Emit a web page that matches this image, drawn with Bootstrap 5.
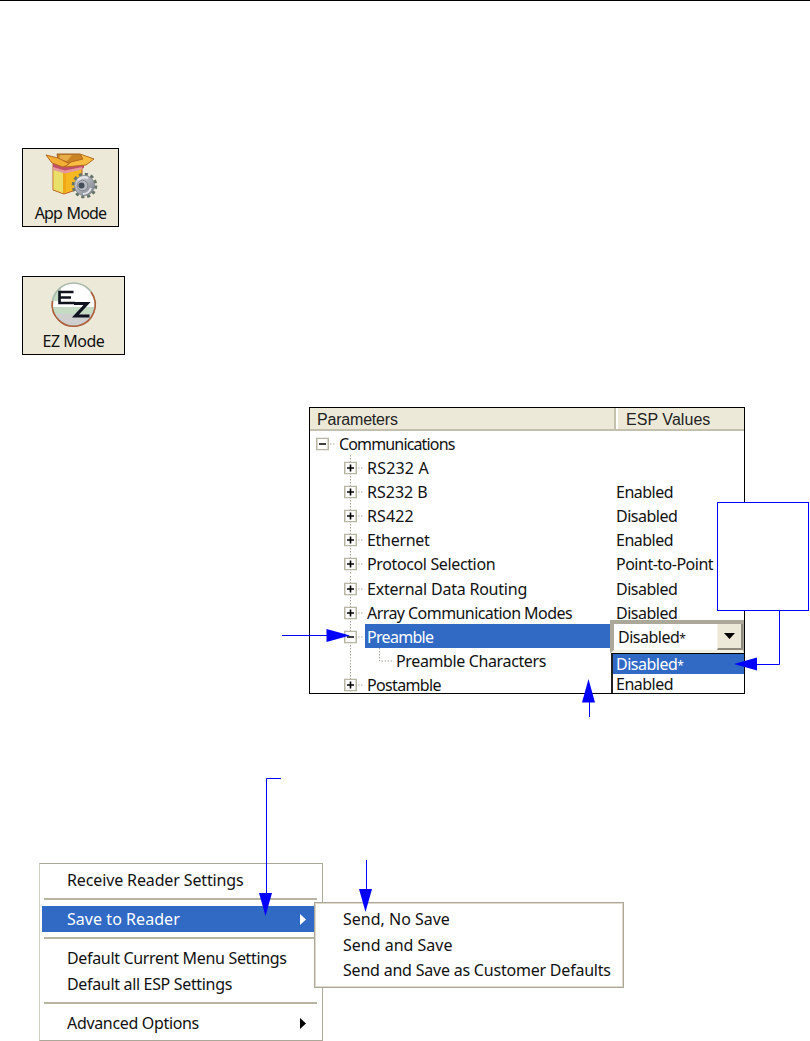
<!DOCTYPE html>
<html lang="en">
<head>
  <meta charset="UTF-8" />
  <meta name="viewport" content="width=device-width, initial-scale=1.0"/>
  <title>ESP Modes and Menus</title>
  <link rel="stylesheet" href="https://cdn.jsdelivr.net/npm/bootstrap@5.3.0/dist/css/bootstrap.min.css">
  <style>
    body {
      font-family: "Noto Sans", "Open Sans", sans-serif;
      font-size: 16px;
      line-height: 24px;
      color: #111;
      background-color: #fff;
    }
    .page {
      width: 810px;
      height: 1041px;
      border-top: 1px solid #000;
    }
    .mode-btn {
      height: 79px;
      border: 1px solid #000;
      background-color: #ece9d8;
      line-height: 20px;
      letter-spacing: -0.5px;
    }
    .mode-app { width: 97px; margin: 147px 0 0 22px; }
    .mode-ez { width: 103px; margin: 49px 0 0 22px; }
    .mode-app .mode-label { word-spacing: 1px; letter-spacing: -0.8px; }

    /* Parameter tree */
    .tree {
      width: 436px;
      height: 287px;
      margin: 52px 0 0 309px;
      border: 1px solid #000;
    }
    .tree-head {
      height: 23px;
      background-color: #ece9d8;
      border-bottom: 2px solid #c3c0ae;
      font-family: "Liberation Sans", Arial, sans-serif;
      color: #222;
    }
    .head-name {
      width: 306px;
      padding-left: 7px;
      border-right: 2px solid #c3c0ae;
      letter-spacing: -0.2px;
    }
    .head-value {
      padding-left: 8px;
      border-left: 2px solid #fff;
      letter-spacing: 0.05px;
    }
    .tree-row { height: 24.1px; line-height: 26px; }
    .tree-row svg { flex: none; }
    .tree-name { width: 248px; padding-left: 2px; margin-right: 3px; }
    .tree-name.root { width: 276px; letter-spacing: -0.85px; }
    .tree-name, .tree-kids { white-space: nowrap; }
    .tree-kids .tree-row { padding-left: 32px; }
    .picked { background-color: #316ac5; color: #fff; }
    .val { letter-spacing: -0.5px; }
    .combo {
      left: 300px;
      top: 212px;
      width: 134px;
      height: 73px;
      background-color: #fff;
    }
    .combo-field {
      height: 33px;
      line-height: 27px;
      border-style: solid;
      border-width: 4px 1px 3px 4px;
      border-color: #aca899 #aca899 #f1efe2 #aca899;
    }
    .combo-arrow {
      width: 26px;
      background-color: #ece9d8;
      border-right: 2px solid #8d8a7b;
      border-bottom: 2px solid #8d8a7b;
      border-left: 1px solid #f5f3e8;
    }
    .combo-list {
      margin-left: 1px;
      height: 40px;
      border-top: 1px solid #000;
      border-left: 2px solid #222;
      line-height: 21px;
    }
    .combo-list div { height: 20px; padding-left: 3px; }
    .star { font-size: 12px; }

    /* Context menu */
    .menu-box {
      width: 284px;
      height: 178px;
      margin: 169px 0 0 39px;
      padding: 3px 3px 3px 2px;
      border: 1px solid #aca899;
      border-left: 1px solid #d6d2c2;
      background-color: #fff;
      line-height: 26px;
    }
    .menu-line { height: 26px; padding-left: 25px; padding-right: 13px; white-space: nowrap; letter-spacing: -0.13px; }
    .menu-line.tight { letter-spacing: -0.33px; }
    .menu-line.plain { letter-spacing: 0.05px; }
    .menu-rule { height: 2px; margin: 5px 2px 6px 2px; background-color: #b7b4a4; }
    .submenu {
      left: 274px;
      top: 38px;
      width: 310px;
      height: 86px;
      padding: 3px;
      border: 1px solid #aca899;
      outline: 1px solid #dedacb;
      outline-offset: -2px;
      background-color: #fff;
    }
    .submenu div { height: 25.6px; padding-left: 25px; white-space: nowrap; }
    .submenu .tight { letter-spacing: -0.21px; }
    .callout { left: 717px; top: 502px; width: 92px; height: 109px; background-color: #fff; border: 1px solid #00f; }
  </style>
</head>
<body>

  <!-- Tree expander symbols -->
  <svg class="d-none">
    <defs>
      <symbol id="box" viewBox="0 0 13 13">
        <rect x="0.75" y="0.75" width="11.5" height="11.5" fill="#fff" stroke="#b9b5a3" stroke-width="1.5"/>
        <path d="M3 6.5H10" stroke="#000" stroke-width="1.6"/>
      </symbol>
      <symbol id="minus" viewBox="0 0 23 24">
        <path d="M8.5 0V24" stroke="#aaa798" stroke-dasharray="1.5 1.5"/>
        <path d="M16 13H22" stroke="#aaa798" stroke-dasharray="1.5 1.5"/>
        <use href="#box" x="2" y="6.500" width="13" height="13"/>
      </symbol>
      <symbol id="plus" viewBox="0 0 23 24">
        <use href="#minus" width="23" height="24"/>
        <path d="M8.5 9.500V16.500" stroke="#000" stroke-width="1.6"/>
      </symbol>
    </defs>
  </svg>

  <main class="page position-relative overflow-hidden d-flex flex-column">

    <!-- Mode buttons -->
    <div class="mode-btn mode-app d-flex flex-column align-items-center flex-shrink-0">
      <svg width="55" height="54" viewBox="-1 -1 55 54">
        <defs>
          <linearGradient id="metal" x1="0" y1="0" x2="1" y2="1">
            <stop offset="0" stop-color="#e0e2e6"/><stop offset="1" stop-color="#747a84"/>
          </linearGradient>
        </defs>
        <path d="M9 14L20 18L38 13V38L20 44L9 40Z" fill="#f5b820" stroke="#b9642a"/>
        <path d="M9.500 16L19 19V43L9.500 39.500Z" fill="#eadf68"/>
        <path d="M19 19L22 18V42L19 43Z" fill="#f0a818"/>
        <path d="M9 12L21 15L40 11V18L21 22L9 18Z" fill="#c0506c"/>
        <path d="M9 17L21 20.500L38 17V19.500L21 23.500L9 20Z" fill="#e59a9c"/>
        <path d="M13 4H36L40 9L27 14L14 9Z" fill="#c98224" stroke="#a8601c"/>
        <path d="M16 5H28L23 11L15 9Z" fill="#e6ad48"/>
        <path d="M2 5L14 8L26 14L19 17L8 13Z" fill="#f2ae35" stroke="#b66b20"/>
        <path d="M36 4L50 9L42 15L21 17L27 12L39 9Z" fill="#f8bd42" stroke="#b66b20"/>
        <circle cx="40.500" cy="35.500" r="10.800" fill="none" stroke="#647469" stroke-width="4" stroke-dasharray="3 2.650"/>
        <circle cx="40.500" cy="35.500" r="10" fill="url(#metal)" stroke="#858b92"/>
        <path d="M34 30A9 9 0 0 1 44 28M47 38A9 9 0 0 1 39 44" fill="none" stroke="#e2e4e7" stroke-width="2"/>
        <circle cx="38.500" cy="35.500" r="5.300" fill="#b7bbc2" stroke="#7d828c"/>
        <circle cx="37.500" cy="35.500" r="3" fill="#444c5a"/>
      </svg>
      <span class="mode-label">App Mode</span>
    </div>

    <div class="mode-btn mode-ez d-flex flex-column align-items-center flex-shrink-0">
      <svg width="50" height="54" viewBox="0 0 50 54">
        <defs><clipPath id="disc"><circle cx="24.700" cy="27.600" r="21.500"/></clipPath></defs>
        <g clip-path="url(#disc)">
          <path d="M0 0H50V54H0Z" fill="#fff"/>
          <path d="M0 30H50V37H0ZM4 10H12V24H4Z" fill="#c5dbc3"/>
          <path d="M0 37H50V54H0Z" fill="#cfcfcf"/>
        </g>
        <circle cx="24.700" cy="27.600" r="21.500" fill="none" stroke="#a9b9aa" stroke-width="1.5"/>
        <path d="M3.500 24A21.500 21.500 0 1 0 42 15" fill="none" stroke="#b0603c" stroke-width="1.6"/>
        <path d="M24.500 15H10.500V26H26M11 20.500H22" fill="none" stroke="#10131f" stroke-width="2.6"/>
        <path d="M25 26.500H38L26.500 39H40.500" fill="none" stroke="#10131f" stroke-width="3.2"/>
      </svg>
      <span class="mode-label">EZ Mode</span>
    </div>

    <!-- Parameters -->
    <section class="tree position-relative overflow-hidden flex-shrink-0">
      <div class="tree-head d-flex">
        <div class="head-name">Parameters</div>
        <div class="head-value flex-fill">ESP Values</div>
      </div>
      <div class="tree-row d-flex ps-1">
        <svg width="23" height="24"><path d="M16 13H22" stroke="#aaa798" stroke-dasharray="1.5 1.5"/><use href="#box" x="2" y="6.500" width="13" height="13"/></svg>
        <div class="tree-name root">Communications</div>
      </div>
      <div class="tree-kids" id="rows"></div>

      <div class="combo position-absolute val">
        <div class="combo-field d-flex">
          <div class="flex-fill ps-1">Disabled<span class="star">*</span></div>
          <div class="combo-arrow d-flex align-items-center justify-content-center">
            <svg width="11" height="6"><path d="M0 0H11L5.500 6Z"/></svg>
          </div>
        </div>
        <div class="combo-list">
          <div class="picked">Disabled<span class="star">*</span></div>
          <div>Enabled</div>
        </div>
      </div>
    </section>

    <!-- Reader menu -->
    <nav class="menu-box position-relative flex-shrink-0">
      <div class="menu-line">Receive Reader Settings</div>
      <div class="menu-rule"></div>
      <div class="menu-line plain picked d-flex align-items-center justify-content-between">
        <span>Save to Reader</span>
        <svg width="6" height="11"><path d="M0 0L6 5.500L0 11Z" fill="#fff"/></svg>
      </div>
      <div class="menu-rule"></div>
      <div class="menu-line tight">Default Current Menu Settings</div>
      <div class="menu-line tight">Default all ESP Settings</div>
      <div class="menu-rule"></div>
      <div class="menu-line tight d-flex align-items-center justify-content-between">
        <span>Advanced Options</span>
        <svg width="6" height="11"><path d="M0 0L6 5.500L0 11Z"/></svg>
      </div>
      <div class="submenu position-absolute">
        <div>Send, No Save</div>
        <div>Send and Save</div>
        <div class="tight">Send and Save as Customer Defaults</div>
      </div>
    </nav>

  </main>

  <!-- Callout box and arrows -->
  <div class="callout position-absolute"></div>
  <svg class="position-absolute top-0 start-0" width="810" height="1041">
    <path d="M779.500 611V664.500H757M282 635.500H327M589.500 702V717M281 778.500H266.500V894M366.500 860V890" fill="none" stroke="#00f"/>
    <path d="M734 664L757 657.500V670.500ZM350 635.500L326.500 629V642ZM588.500 679L582 702.500H595ZM265.500 916L259 893H272ZM365.500 912L359 889H372Z" fill="#00f"/>
  </svg>

  <script src="https://cdn.jsdelivr.net/npm/bootstrap@5.3.0/dist/js/bootstrap.bundle.min.js"></script>
  <script>
    // name, value, row kind, letter spacing of the name
    const params = [
      ["RS232 A", "", "plus", 0.2],
      ["RS232 B", "Enabled", "plus", 0],
      ["RS422", "Disabled", "plus", 0.1],
      ["Ethernet", "Enabled", "plus", -0.3],
      ["Protocol Selection", "Point-to-Point", "plus", -0.37],
      ["External Data Routing", "Disabled", "plus", -0.22],
      ["Array Communication Modes", "Disabled", "plus", -0.56],
      ["Preamble", "", "minus", -0.7],
      ["Preamble Characters", "", "child", -0.37],
      ["Postamble", "", "plus", -0.65]
    ];

    document.getElementById("rows").innerHTML = params.map(([name, value, kind, spacing]) => {
      const icon = kind === "child"
        ? '<svg width="52" height="24"><path d="M8.5 0V24M37.5 0V13H51" fill="none" stroke="#aaa798" stroke-dasharray="1.5 1.5"/></svg>'
        : `<svg width="23" height="24"><use href="#${kind}" width="23" height="24"/></svg>`;
      const picked = kind === "minus" ? " picked" : "";
      return `<div class="tree-row d-flex">${icon}<div class="tree-name${picked}" style="letter-spacing: ${spacing}px">${name}</div><div class="val">${value}</div></div>`;
    }).join("");
  </script>
</body>
</html>
